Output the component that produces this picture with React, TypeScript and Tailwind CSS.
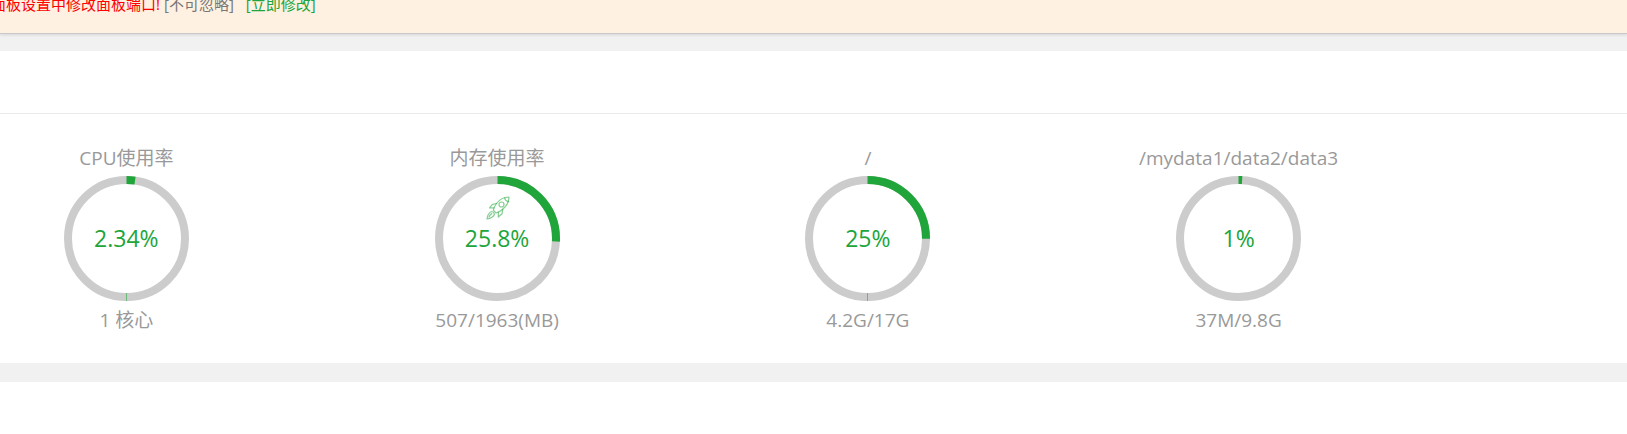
type Gauge = {
  title: string;
  percent: number;
  detail: string;
  seam?: string;
  boost?: boolean;
};

const gauges: Gauge[] = [
  { title: "CPU使用率", percent: 2.34, detail: "1 核心", seam: "#6bb87a" },
  { title: "内存使用率", percent: 25.8, detail: "507/1963(MB)", boost: true },
  { title: "/", percent: 25, detail: "4.2G/17G", seam: "#6bb87a" },
  { title: "/mydata1/data2/data3", percent: 1, detail: "37M/9.8G" },
];

function RocketIcon() {
  return (
    <svg viewBox="0 0 24 24" className="size-6" fill="none" stroke="#20a53a" strokeOpacity="0.55" strokeWidth="1.2" strokeLinejoin="round" strokeLinecap="round" aria-hidden="true">
      <path d="M23 1C17.5 1 13.5 3.500 10.500 7.500C8.800 9.800 7.800 12 7.300 14.200L10 17C12.300 16.300 14.500 15.200 16.700 13.300C20.600 10 23 6.300 23 1Z" />
      <path d="M18.500 1.800C19 3.800 20.500 5.200 22.400 5.600" />
      <circle cx="15.500" cy="8.500" r="2.500" />
      <path d="M10.500 7.500L6.500 8.300L3.500 12L8 11.800" />
      <path d="M16.700 13.300L16 17.800L12.300 21L12.400 16" />
      <path d="M5.800 15.500C3 16.300 1.500 19 1 23C4.600 22.500 7.500 21 8.500 18.300C8.200 16.800 7.200 15.800 5.800 15.500Z" />
      <path d="M3 21C3.500 19.300 4.400 18.300 5.800 17.600" />
    </svg>
  );
}

function Ring({ percent, seam, boost }: Gauge) {
  const radius = 58.5;
  const length = 2 * Math.PI * radius;

  return (
    <div className="relative size-[125px]">
      <svg viewBox="0 0 125 125" className="size-full" fill="none" strokeWidth="8" aria-hidden="true">
        <circle cx="62.5" cy="62.5" r={radius} stroke="#cccccc" />
        <circle
          cx="62.5"
          cy="62.5"
          r={radius}
          stroke="#20a53a"
          strokeDasharray={`${(length * percent) / 100} ${length}`}
          transform="rotate(-90 62.5 62.5)"
        />
        {seam && <path d="M62.5 117V125" stroke={seam} strokeWidth="1" />}
      </svg>
      <span className="absolute inset-0 flex items-center justify-center pb-0.5 text-[23px] text-[#20a53a]">
        {percent}%
      </span>
      {boost && (
        <button type="button" aria-label="释放内存" className="absolute left-[51px] top-5 cursor-pointer">
          <RocketIcon />
        </button>
      )}
    </div>
  );
}

export default function App() {
  return (
    <div className="flex min-h-screen flex-col overflow-hidden bg-[#f1f1f1] font-['Open_Sans','Noto_Sans_CJK_SC',sans-serif]">
      {/* Warning bar */}
      <div className="overflow-hidden border-b border-[#cbc8ca] bg-[#fef1e1] shadow-[0_1px_3px_rgba(0,0,0,0.12)]">
        <p className="-mt-2 -ml-[9px] pb-[17px] text-[15px] leading-6 whitespace-nowrap">
          <span className="text-[#ff0000]">面板设置中修改面板端口!</span>
          <span className="ml-1 text-[#777777]">[不可忽略]</span>
          <a href="#port" className="ml-3 text-[#20a53a]">[立即修改]</a>
        </p>
      </div>

      {/* Status panel */}
      <section className="mt-[17px] bg-white">
        <div className="h-[63px] border-b border-[#ebebeb]" />
        <ul className="-ml-[59px] mr-[203px] grid grid-cols-4 pt-8 pb-[31px] text-[19px] leading-6 text-[#999999]">
          {gauges.map((gauge) => (
            <li key={gauge.title} className="flex flex-col items-center whitespace-nowrap">
              <h3 className="mb-[6px]">{gauge.title}</h3>
              <Ring {...gauge} />
              <p className="mt-[7px]">{gauge.detail}</p>
            </li>
          ))}
        </ul>
      </section>

      <section className="mt-[19px] flex-1 bg-white" />
    </div>
  );
}
